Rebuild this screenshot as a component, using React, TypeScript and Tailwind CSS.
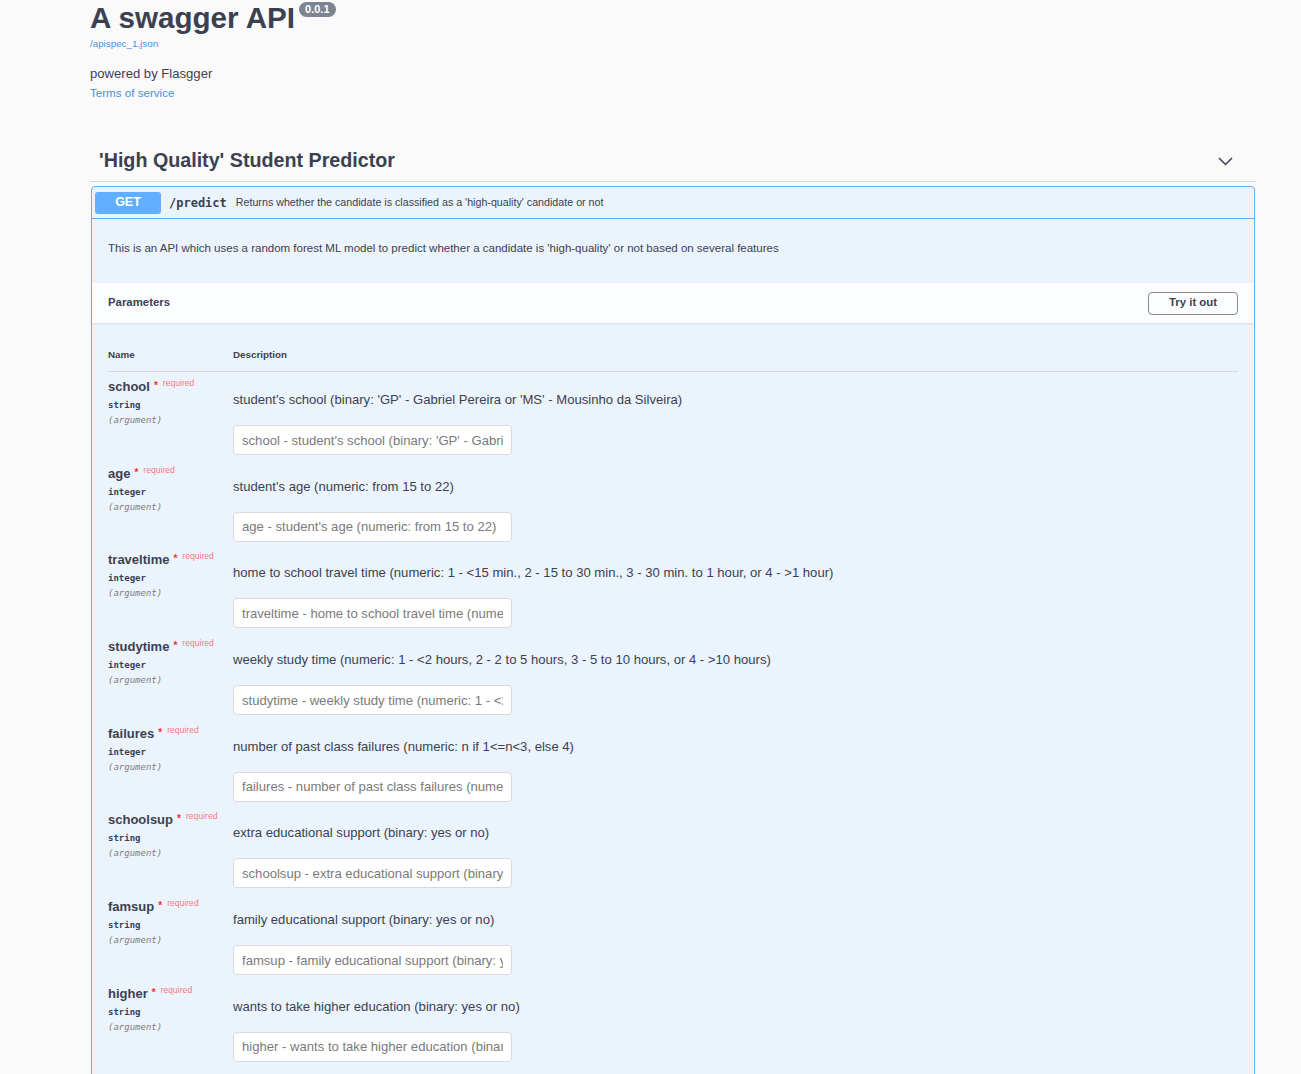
import React from "react";

const params = [
  { name: "school", type: "string", desc: "student's school (binary: 'GP' - Gabriel Pereira or 'MS' - Mousinho da Silveira)" },
  { name: "age", type: "integer", desc: "student's age (numeric: from 15 to 22)" },
  { name: "traveltime", type: "integer", desc: "home to school travel time (numeric: 1 - <15 min., 2 - 15 to 30 min., 3 - 30 min. to 1 hour, or 4 - >1 hour)" },
  { name: "studytime", type: "integer", desc: "weekly study time (numeric: 1 - <2 hours, 2 - 2 to 5 hours, 3 - 5 to 10 hours, or 4 - >10 hours)" },
  { name: "failures", type: "integer", desc: "number of past class failures (numeric: n if 1<=n<3, else 4)" },
  { name: "schoolsup", type: "string", desc: "extra educational support (binary: yes or no)" },
  { name: "famsup", type: "string", desc: "family educational support (binary: yes or no)" },
  { name: "higher", type: "string", desc: "wants to take higher education (binary: yes or no)" },
];

function ParamRow({ name, type, desc }: { name: string; type: string; desc: string }) {
  return (
    <div className="flex h-[86.7px]">
      <div className="w-[125px] shrink-0 pt-[7px]">
        <div className="flex items-start">
          <span className="text-[13px] leading-[16px] font-bold text-[#3b4151]">{name}</span>
          <span className="ml-[4px] mt-[-1px] text-[10px] leading-[16px] font-bold text-[#ff2b2b]">*</span>
          <span className="ml-[5px] mt-[-4px] text-[8.6px] leading-[16px] text-[rgba(255,0,0,0.55)]">required</span>
        </div>
        <div className="mt-[4px] font-['DejaVu_Sans_Mono',monospace] text-[9px] leading-[12px] font-semibold text-[#3b4151]">{type}</div>
        <div className="mt-[3px] font-['DejaVu_Sans_Mono',monospace] text-[9px] leading-[12px] italic text-[#808080]">(argument)</div>
      </div>
      <div className="flex-1 pt-[20px]">
        <div className="text-[13.1px] leading-[16px] text-[#3b4151]">{desc}</div>
        <input
          readOnly
          placeholder={`${name} - ${desc}`}
          className="mt-[17px] block h-[30px] w-[279px] rounded-[4px] border border-[#d9d9d9] bg-white px-[8px] text-[13.1px] text-[#3b4151] outline-none placeholder:text-[#7a7a7a]"
        />
      </div>
    </div>
  );
}

export default function App() {
  return (
    <div className="min-h-screen bg-[#fafafa] font-['Liberation_Sans',Arial,sans-serif] text-[#3b4151]">
      <div className="ml-[90px] w-[1166px]">
        {/* Info */}
        <div>
          <div className="flex items-start">
            <h1 className="text-[29.6px] leading-[36px] font-bold text-[#3b4151]">A swagger API</h1>
            <span className="ml-[4px] mt-[2px] h-[15px] rounded-full bg-[#7d8492] px-[6px] text-[11px] leading-[15px] font-bold text-white">
              0.0.1
            </span>
          </div>
          <div className="mt-[2px] text-[9.8px] leading-[12px] text-[#4990e2]">/apispec_1.json</div>
          <div className="mt-[16px] text-[13.1px] leading-[16px] text-[#3b4151]">powered by Flasgger</div>
          <div className="mt-[4px] text-[11.6px] leading-[14px] text-[#4990e2]">Terms of service</div>
        </div>

        {/* Tag header */}
        <div className="mt-[41px] flex h-[41px] items-center justify-between border-b border-[#d3d5d9] pl-[9px] pr-[23px]">
          <span className="text-[19.7px] font-bold text-[#3b4151]">'High Quality' Student Predictor</span>
          <svg width="15" height="9" viewBox="0 0 15 9" fill="none">
            <path d="M1 1 L7.5 7.5 L14 1" stroke="#3b4151" strokeWidth="1.5" />
          </svg>
        </div>

        {/* Opblock */}
        <div className="mx-[1px] mt-[4px] rounded-[4px] border border-[#61affe] bg-[#ebf3fc] pb-[40px]">
          <div className="flex h-[32px] items-center border-b border-[#61affe] pl-[3px]">
            <div className="flex h-[22px] w-[66px] items-center justify-center rounded-[3px] bg-[#61affe] text-[12.5px] font-bold text-white">
              GET
            </div>
            <span className="ml-[8px] font-['DejaVu_Sans_Mono',monospace] text-[12px] font-semibold text-[#3b4151]">/predict</span>
            <span className="ml-[9px] text-[10.7px] text-[#3b4151]">
              Returns whether the candidate is classified as a 'high-quality' candidate or not
            </span>
          </div>

          <div className="px-[16px] pt-[22px] pb-[28px] text-[11.5px] leading-[14px] text-[#3b4151]">
            This is an API which uses a random forest ML model to predict whether a candidate is 'high-quality' or not based on several features
          </div>

          <div className="flex h-[40px] items-center justify-between bg-[rgba(255,255,255,0.8)] px-[16px] shadow-[0_1px_2px_rgba(0,0,0,0.1)]">
            <span className="text-[11.4px] font-bold text-[#3b4151]">Parameters</span>
            <button className="h-[23px] w-[90px] rounded-[4px] border-[1.5px] border-[#8a8a8a] bg-transparent text-[11.4px] font-bold text-[#3b4151]">
              Try it out
            </button>
          </div>

          <div className="px-[16px] pt-[26px]">
            <div className="flex border-b border-[#d4d7dd] pb-[10px]">
              <div className="w-[125px] text-[9.8px] leading-[12px] font-bold text-[#3b4151]">Name</div>
              <div className="text-[9.8px] leading-[12px] font-bold text-[#3b4151]">Description</div>
            </div>
            {params.map((p) => (
              <ParamRow key={p.name} {...p} />
            ))}
          </div>
        </div>
      </div>
    </div>
  );
}
